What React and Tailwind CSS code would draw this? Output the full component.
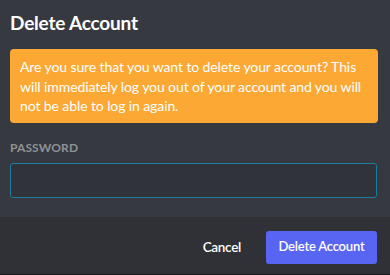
import React from "react";

export default function App() {
  return (
    <div className="w-[390px] h-[275px] bg-[#18191c] flex flex-col overflow-hidden" style={{ fontFamily: "Lato, 'Noto Sans', sans-serif" }}>
      <div className="bg-[#36393f] flex flex-col px-[10px]">
        <div className="pt-[11px] h-[49px] text-[19px] font-bold text-white leading-[24px] tracking-[-0.2px]">Delete Account</div>
        <div className="bg-[#fca834] rounded-[4px] pl-[10px] pr-[10px] pt-[8px] pb-[7px] text-[14px] leading-[19.5px] tracking-[-0.1px] text-white mr-[2px]">
          Are you sure that you want to delete your account? This will immediately log you out of your account and you will not be able to log in again.
        </div>
        <div className="mt-[17px] text-[12px] font-bold uppercase tracking-[0.01em] text-[#8e9297] leading-[16px]">Password</div>
        <input type="password" className="mt-[7px] h-[35px] w-[367px] rounded-[3px] border border-[#1a7ea0] bg-[#303339] outline-none text-white px-[10px]" />
        <div className="h-[19px]" />
      </div>
      <div className="bg-[#2f3136] h-[57px] flex items-start justify-end pt-[14px] pr-[13px]">
        <button className="h-[33px] px-[4px] text-[13.5px] font-semibold text-white tracking-[-0.3px]">Cancel</button>
        <button className="ml-[21px] h-[33px] w-[111px] rounded-[3px] bg-[#5865f2] text-[13px] font-semibold text-white tracking-[-0.2px]">Delete Account</button>
      </div>
    </div>
  );
}
